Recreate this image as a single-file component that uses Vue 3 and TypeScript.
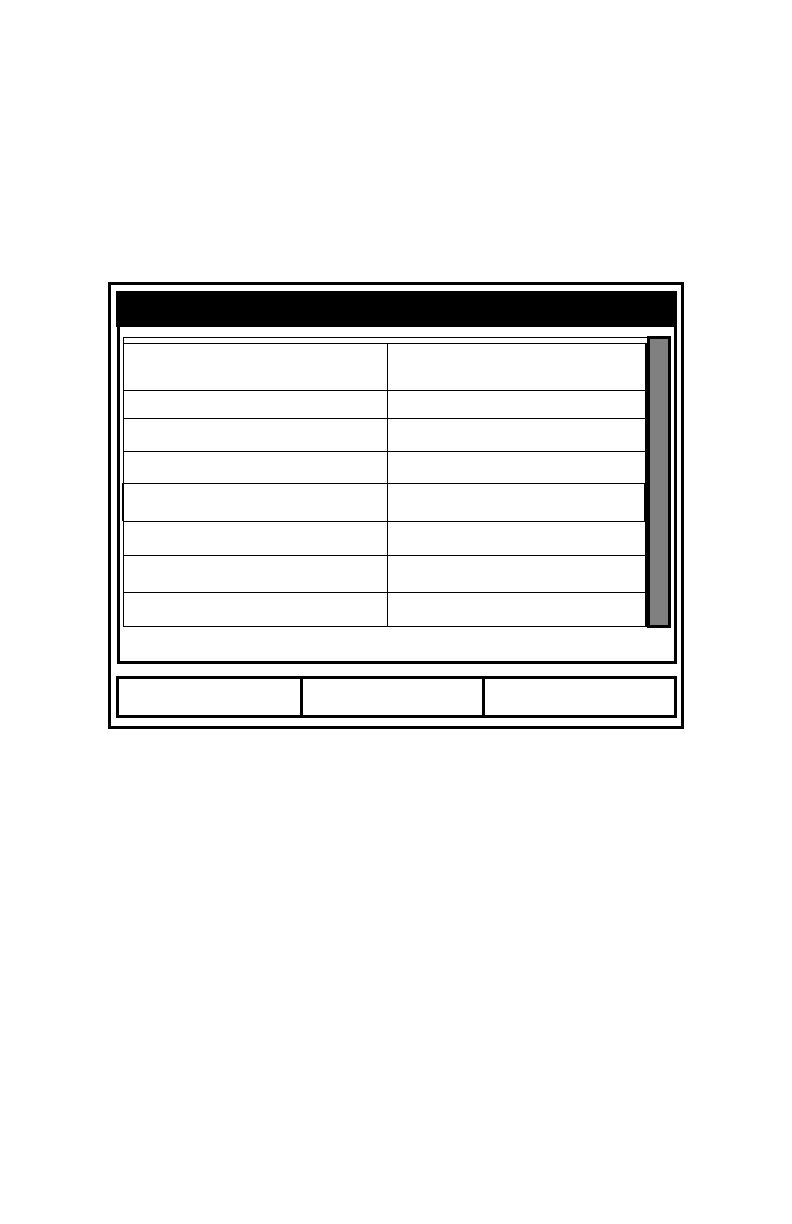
<script setup lang="ts">
interface Row {
  id: number
  height: number
  selected?: boolean
}

const rows: Row[] = [
  { id: 1, height: 47 },
  { id: 2, height: 28 },
  { id: 3, height: 33 },
  { id: 4, height: 32 },
  { id: 5, height: 38, selected: true },
  { id: 6, height: 34 },
  { id: 7, height: 37 },
  { id: 8, height: 35 },
]

const softKeys: string[] = ['Left key', 'Middle key', 'Right key']
</script>

<template>
  <main class="page">
    <section class="device">
      <header class="title-bar"></header>
      <div class="panel">
        <table class="list">
          <colgroup>
            <col class="col-name" />
            <col />
          </colgroup>
          <thead>
            <tr>
              <td colspan="2" class="head"></td>
            </tr>
          </thead>
          <tbody>
            <tr
              v-for="row in rows"
              :key="row.id"
              :class="{ selected: row.selected }"
              :style="{ height: row.height + 'px' }"
            >
              <td class="name"></td>
              <td class="value"></td>
            </tr>
          </tbody>
        </table>
        <div class="scroll-track"></div>
      </div>
      <nav class="soft-keys">
        <button
          v-for="key in softKeys"
          :key="key"
          type="button"
          class="soft-key"
          :aria-label="key"
        ></button>
      </nav>
    </section>
  </main>
</template>

<style>
body {
  background: #fff;
}
</style>

<style scoped>
.page {
  padding: 282px 108px 0;
  font-family: "Liberation Sans", Arial, sans-serif;
}

.device {
  border: 3px solid #000;
  padding: 6px 4px 8px 5px;
}

.title-bar {
  height: 36px;
  background: #000;
}

.panel {
  display: flex;
  margin-left: 1px;
  padding: 9px 3px 33px;
  border: 3px solid #000;
  border-top: 0;
}

.list {
  flex: 1;
  margin: 1px 0;
  table-layout: fixed;
  border-collapse: separate;
  border-spacing: 0;
}

.col-name {
  width: 50.4%;
}

td {
  box-sizing: border-box;
  padding: 0;
  border-top: 1px solid #000;
  border-left: 1px solid #000;
}

.head {
  height: 6px;
}

.value {
  border-right: 2px solid #000;
}

tbody tr:last-child td {
  border-bottom: 1px solid #000;
}

.selected .name {
  box-shadow: -1px 0 0 #000;
}

.selected .value {
  border-right-width: 3px;
}

.scroll-track {
  box-sizing: border-box;
  width: 24px;
  border: 3px solid #000;
  background: #808080;
}

.soft-keys {
  display: grid;
  grid-template-columns: 181fr 179fr 189fr;
  gap: 3px;
  margin-top: 12px;
  padding: 3px;
  background: #000;
}

.soft-key {
  height: 36px;
  padding: 0;
  border: 0;
  border-radius: 0;
  background: #fff;
}
</style>
